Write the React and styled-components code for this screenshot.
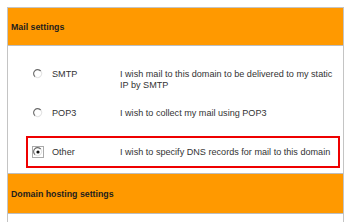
import React from "react";
import styled, { createGlobalStyle } from "styled-components";

const GlobalStyle = createGlobalStyle`
  html, body {
    margin: 0;
    padding: 0;
    background: #ffffff;
  }
  body {
    font-family: "Liberation Sans", Arial, sans-serif;
  }
`;

const Page = styled.div`
  width: 350px;
  height: 222px;
  overflow: hidden;
  padding: 7px 6px 0 7px;
  box-sizing: border-box;
`;

const Panel = styled.div`
  width: 337px;
  height: 230px;
  box-sizing: border-box;
  border: 1px solid #c4c4c4;
  display: flex;
  flex-direction: column;
`;

const SectionHeader = styled.div`
  height: ${(p) => p.h}px;
  flex: none;
  display: flex;
  align-items: center;
  padding-left: 3px;
  background: #ff9900;
  border-top: ${(p) => (p.first ? "none" : "1px solid #bdbdbd")};
  border-bottom: 1px solid #bdbdbd;
  font-size: 8.8px;
  font-weight: bold;
  color: #1e1e1e;
`;

const Options = styled.div`
  display: flex;
  flex-direction: column;
  gap: 7px;
  padding: 12px 3px 5px 18px;
`;

const Row = styled.div`
  height: 32px;
  box-sizing: border-box;
  border: 2px solid ${(p) => (p.highlight ? "#ee0000" : "transparent")};
  padding: 8.5px 0 0 4px;
  display: grid;
  grid-template-columns: 20px 68px 1fr;
  align-items: start;
  font-size: 9.1px;
  line-height: 11px;
  color: #333;
`;

const RadioCell = styled.div`
  height: 11px;
  display: flex;
  align-items: center;
`;

const Label = styled.div`
  white-space: nowrap;
`;

const Desc = styled.div`
  padding-right: 0;
`;

function Radio({ checked }) {
  return (
    <svg width="12" height="12" viewBox="0 0 12 12">
      {checked && (
        <rect
          x="0.5"
          y="0.5"
          width="11"
          height="11"
          fill="none"
          stroke="#555"
          strokeWidth="1"
          strokeDasharray="1 1"
        />
      )}
      <circle cx="6" cy="6" r="4" fill="#fff" />
      <path d="M8.8 3.2 A4 4 0 1 0 3.2 8.8" fill="none" stroke="#6a6a6a" strokeWidth="1.1" />
      <path d="M3.2 8.8 A4 4 0 0 0 8.8 3.2" fill="none" stroke="#e4e4e4" strokeWidth="1.1" />
      {checked && <circle cx="6" cy="6" r="1.6" fill="#111" />}
    </svg>
  );
}

const options = [
  {
    label: "SMTP",
    desc: "I wish mail to this domain to be delivered to my static IP by SMTP",
  },
  { label: "POP3", desc: "I wish to collect my mail using POP3" },
  {
    label: "Other",
    desc: "I wish to specify DNS records for mail to this domain",
    checked: true,
  },
];

export default function App() {
  return (
    <Page>
      <GlobalStyle />
      <Panel>
        <SectionHeader first h={37}>Mail settings</SectionHeader>
        <Options>
          {options.map((o) => (
            <Row key={o.label} highlight={o.checked}>
              <RadioCell>
                <Radio checked={o.checked} />
              </RadioCell>
              <Label>{o.label}</Label>
              <Desc>{o.desc}</Desc>
            </Row>
          ))}
        </Options>
        <SectionHeader h={39}>Domain hosting settings</SectionHeader>
      </Panel>
    </Page>
  );
}
